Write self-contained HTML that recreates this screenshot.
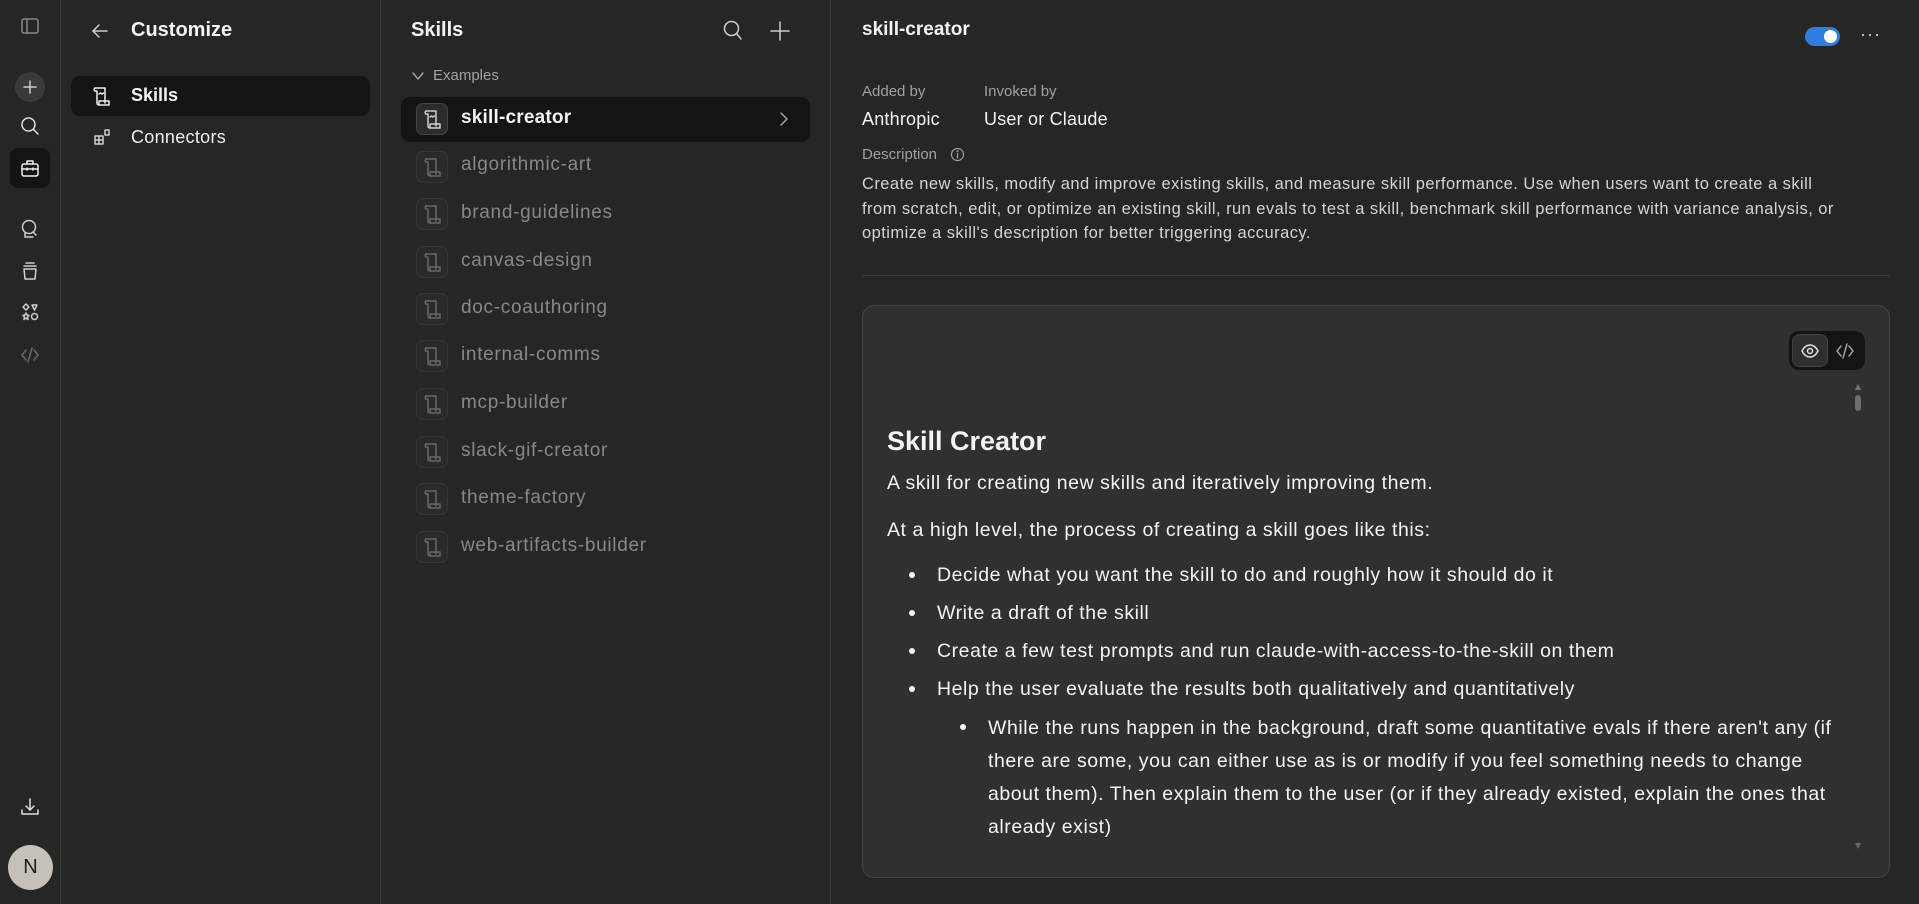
<!DOCTYPE html>
<html><head><meta charset="utf-8"><style>
*{box-sizing:border-box;margin:0;padding:0}
body{width:1919px;height:904px;background:#262624;font-family:"Liberation Sans",sans-serif;color:#f5f4ef;position:relative;overflow:hidden}
.abs{position:absolute}
.vl{position:absolute;top:0;width:1px;height:904px;background:#3a3a37}
svg{position:absolute;fill:none;stroke:currentColor;stroke-width:1.5;stroke-linecap:round;stroke-linejoin:round}
.ico{color:#c8c6bf}
.item{position:absolute;left:416px;font-size:19px;letter-spacing:0.7px;color:#8a8883;white-space:nowrap}
.ib{position:absolute;left:416px;width:32px;height:32px;border:1px solid #363633;border-radius:7px;background:#2a2a28}
.lbl{font-size:15px;color:#a3a19b}
.ct{font-size:19.5px;letter-spacing:0.55px;color:#f5f4ef;position:absolute;white-space:nowrap}
.dot{position:absolute;width:6px;height:6px;border-radius:50%;background:#f5f4ef}
</style></head><body>
<div class="vl" style="left:60px"></div>
<div class="vl" style="left:380px"></div>
<div class="vl" style="left:830px"></div>

<!-- left rail -->
<svg class="ico" style="left:20px;top:16px;color:#8a8883" width="20" height="20" viewBox="0 0 20 20"><rect x="2" y="3" width="16" height="14" rx="2"/><line x1="7" y1="3" x2="7" y2="17"/></svg>
<div class="abs" style="left:15px;top:72px;width:30px;height:30px;border-radius:50%;background:#3a3a37"></div>
<svg style="left:20px;top:77px;color:#d0cec7" width="20" height="20" viewBox="0 0 20 20"><line x1="10" y1="4" x2="10" y2="16"/><line x1="4" y1="10" x2="16" y2="10"/></svg>
<svg style="left:19px;top:115px;color:#e0ded7" width="22" height="22" viewBox="0 0 22 22"><circle cx="9.5" cy="9.5" r="6.5"/><line x1="14.5" y1="14.5" x2="19" y2="19"/></svg>
<div class="abs" style="left:10px;top:148px;width:40px;height:40px;border-radius:8px;background:#141413"></div>
<svg style="left:19px;top:157px;color:#f0eee8" width="22" height="22" viewBox="0 0 22 22"><rect x="3" y="7" width="16" height="12" rx="2"/><path d="M8 7V4h6v3"/><line x1="3" y1="12" x2="19" y2="12"/><line x1="8" y1="11" x2="8" y2="13"/><line x1="14" y1="11" x2="14" y2="13"/></svg>
<svg style="left:19px;top:218px;color:#d0cec7" width="22" height="22" viewBox="0 0 22 22"><circle cx="10" cy="9" r="6.5"/><path d="M6 15v4h8"/><path d="M14 14l3 3"/></svg>
<svg style="left:20px;top:260px;color:#d0cec7" width="20" height="22" viewBox="0 0 20 22"><line x1="6" y1="3" x2="14" y2="3"/><line x1="4" y1="6" x2="16" y2="6"/><path d="M4 9h12l-1 10H5z"/></svg>
<svg style="left:20px;top:302px;color:#d0cec7" width="20" height="20" viewBox="0 0 20 20"><path d="M6 2l3 3-3 3-3-3z"/><path d="M12 3h5l-2.5 5z"/><path d="M6 11l1 2 2 .5-1.5 1.5.5 2.5L6 16l-2 1.5.5-2.5L3 13.5 5 13z"/><circle cx="14.5" cy="14.5" r="3"/></svg>
<svg style="left:20px;top:345px;color:#6a6864" width="20" height="20" viewBox="0 0 20 20"><path d="M6 5l-4 5 4 5"/><path d="M14 5l4 5-4 5"/><line x1="12" y1="3" x2="8" y2="17"/></svg>
<svg style="left:20px;top:797px;color:#e0ded7" width="20" height="20" viewBox="0 0 20 20"><line x1="10" y1="2" x2="10" y2="13"/><path d="M6 9l4 4 4-4"/><path d="M2 13v4h16v-4"/></svg>
<div class="abs" style="left:8px;top:845px;width:45px;height:45px;border-radius:50%;background:#c4c1b9;color:#1e1e1d;font-size:20px;text-align:center;line-height:45px">N</div>

<!-- customize column -->
<svg style="left:90px;top:21px;color:#d0cec7" width="20" height="20" viewBox="0 0 20 20"><line x1="3" y1="10" x2="17" y2="10"/><path d="M9 4l-6 6 6 6"/></svg>
<div class="abs" style="left:131px;top:19px;font-size:20px;font-weight:bold">Customize</div>
<div class="abs" style="left:71px;top:76px;width:299px;height:40px;border-radius:9px;background:#141413"></div>
<svg style="left:92px;top:85px;color:#f0eee8" width="20" height="22" viewBox="0 0 20 22"><path d="M3 3h10v15"/><path d="M3 3c-1 0-1 3 0 3h2v12c0 2 2 2 2 2h10v-4H7v4"/><path d="M7 9l1.5-1 1.5 1 1.5-1"/></svg>
<div class="abs" style="left:131px;top:85px;font-size:18px;font-weight:bold">Skills</div>
<svg style="left:92px;top:127px;color:#d0cec7" width="20" height="20" viewBox="0 0 20 20"><rect x="3" y="9" width="8" height="8"/><line x1="7" y1="9" x2="7" y2="17"/><line x1="3" y1="13" x2="11" y2="13"/><rect x="13" y="3" width="4" height="5"/></svg>
<div class="abs" style="left:131px;top:127px;font-size:18px;color:#f0eee8;letter-spacing:0.3px">Connectors</div>

<!-- skills column -->
<div class="abs" style="left:411px;top:19px;font-size:20px;font-weight:bold">Skills</div>
<svg style="left:722px;top:19px;color:#d0cec7" width="22" height="22" viewBox="0 0 22 22"><circle cx="9.5" cy="9.5" r="7"/><line x1="14.5" y1="14.5" x2="19" y2="20"/></svg>
<svg style="left:769px;top:20px;color:#d0cec7" width="22" height="22" viewBox="0 0 22 22"><line x1="11" y1="2" x2="11" y2="20"/><line x1="2" y1="11" x2="20" y2="11"/></svg>
<svg style="left:411px;top:69px;color:#a3a19b" width="14" height="14" viewBox="0 0 14 14"><path d="M2 4l5 6 5-6"/></svg>
<div class="abs lbl" style="left:433px;top:67px">Examples</div>
<div class="abs" style="left:401px;top:97px;width:409px;height:45px;border-radius:9px;background:#141413"></div>
<svg style="left:778px;top:110px;color:#a3a19b" width="12" height="18" viewBox="0 0 12 18"><path d="M3 3l6 6-6 6"/></svg>

<div class="ib" style="top:103px;border-color:#444;background:#2c2c2a"></div>
<div class="item" style="left:461px;top:107px;color:#f5f4ef;font-weight:bold;letter-spacing:0.2px">skill-creator</div>
<div class="ib" style="top:151px"></div><div class="item" style="left:461px;top:154px">algorithmic-art</div>
<div class="ib" style="top:198px"></div><div class="item" style="left:461px;top:202px">brand-guidelines</div>
<div class="ib" style="top:246px"></div><div class="item" style="left:461px;top:250px">canvas-design</div>
<div class="ib" style="top:293px"></div><div class="item" style="left:461px;top:297px">doc-coauthoring</div>
<div class="ib" style="top:340px"></div><div class="item" style="left:461px;top:344px">internal-comms</div>
<div class="ib" style="top:388px"></div><div class="item" style="left:461px;top:392px">mcp-builder</div>
<div class="ib" style="top:436px"></div><div class="item" style="left:461px;top:440px">slack-gif-creator</div>
<div class="ib" style="top:483px"></div><div class="item" style="left:461px;top:487px">theme-factory</div>
<div class="ib" style="top:531px"></div><div class="item" style="left:461px;top:535px">web-artifacts-builder</div>
<svg style="left:423px;top:108px;color:#d0cec7" width="20" height="22" viewBox="0 0 20 22"><path d="M3 3h10v15"/><path d="M3 3c-1 0-1 3 0 3h2v12c0 2 2 2 2 2h10v-4H7v4"/><path d="M7 9l1.5-1 1.5 1 1.5-1"/></svg>
<svg style="left:423px;top:156px;color:#6a6864" width="20" height="22" viewBox="0 0 20 22"><path d="M3 3h10v15"/><path d="M3 3c-1 0-1 3 0 3h2v12c0 2 2 2 2 2h10v-4H7v4"/></svg>
<svg style="left:423px;top:203px;color:#6a6864" width="20" height="22" viewBox="0 0 20 22"><path d="M3 3h10v15"/><path d="M3 3c-1 0-1 3 0 3h2v12c0 2 2 2 2 2h10v-4H7v4"/></svg>
<svg style="left:423px;top:251px;color:#6a6864" width="20" height="22" viewBox="0 0 20 22"><path d="M3 3h10v15"/><path d="M3 3c-1 0-1 3 0 3h2v12c0 2 2 2 2 2h10v-4H7v4"/></svg>
<svg style="left:423px;top:298px;color:#6a6864" width="20" height="22" viewBox="0 0 20 22"><path d="M3 3h10v15"/><path d="M3 3c-1 0-1 3 0 3h2v12c0 2 2 2 2 2h10v-4H7v4"/></svg>
<svg style="left:423px;top:345px;color:#6a6864" width="20" height="22" viewBox="0 0 20 22"><path d="M3 3h10v15"/><path d="M3 3c-1 0-1 3 0 3h2v12c0 2 2 2 2 2h10v-4H7v4"/></svg>
<svg style="left:423px;top:393px;color:#6a6864" width="20" height="22" viewBox="0 0 20 22"><path d="M3 3h10v15"/><path d="M3 3c-1 0-1 3 0 3h2v12c0 2 2 2 2 2h10v-4H7v4"/></svg>
<svg style="left:423px;top:441px;color:#6a6864" width="20" height="22" viewBox="0 0 20 22"><path d="M3 3h10v15"/><path d="M3 3c-1 0-1 3 0 3h2v12c0 2 2 2 2 2h10v-4H7v4"/></svg>
<svg style="left:423px;top:488px;color:#6a6864" width="20" height="22" viewBox="0 0 20 22"><path d="M3 3h10v15"/><path d="M3 3c-1 0-1 3 0 3h2v12c0 2 2 2 2 2h10v-4H7v4"/></svg>
<svg style="left:423px;top:536px;color:#6a6864" width="20" height="22" viewBox="0 0 20 22"><path d="M3 3h10v15"/><path d="M3 3c-1 0-1 3 0 3h2v12c0 2 2 2 2 2h10v-4H7v4"/></svg>

<!-- right panel -->
<div class="abs" style="left:862px;top:19px;font-size:19px;font-weight:bold">skill-creator</div>
<div class="abs" style="left:1805px;top:27px;width:35px;height:19px;border-radius:10px;background:#2d7ee0"></div>
<div class="abs" style="left:1824px;top:30px;width:13px;height:13px;border-radius:50%;background:#fff"></div>
<div class="abs" style="left:1860px;top:24px;font-size:18px;color:#d0cec7;letter-spacing:1px">···</div>
<div class="abs lbl" style="left:862px;top:83px">Added by</div>
<div class="abs lbl" style="left:984px;top:83px">Invoked by</div>
<div class="abs" style="left:862px;top:109px;font-size:18px;letter-spacing:0.2px">Anthropic</div>
<div class="abs" style="left:984px;top:109px;font-size:18px;letter-spacing:0.2px">User or Claude</div>
<div class="abs lbl" style="left:862px;top:146px">Description</div>
<svg style="left:950px;top:147px;color:#a3a19b;stroke-width:1.2" width="15" height="15" viewBox="0 0 15 15"><circle cx="7.5" cy="7.5" r="6"/><line x1="7.5" y1="6.5" x2="7.5" y2="11"/><circle cx="7.5" cy="4.3" r=".4"/></svg>
<div class="abs" style="left:862px;top:172px;font-size:16.5px;letter-spacing:0.45px;line-height:24.5px;color:#d6d4cd;white-space:nowrap">Create new skills, modify and improve existing skills, and measure skill performance. Use when users want to create a skill<br>from scratch, edit, or optimize an existing skill, run evals to test a skill, benchmark skill performance with variance analysis, or<br>optimize a skill's description for better triggering accuracy.</div>
<div class="abs" style="left:862px;top:275px;width:1028px;height:1px;background:#3a3a37"></div>

<div class="abs" style="left:862px;top:305px;width:1028px;height:573px;border-radius:12px;background:#30302e;border:1px solid #42423f"></div>
<div class="abs" style="left:1789px;top:331px;width:76px;height:39px;border-radius:10px;background:#141413"></div>
<div class="abs" style="left:1792px;top:334px;width:36px;height:33px;border-radius:8px;background:#2f2f2d;border:1px solid #444"></div>
<svg style="left:1800px;top:341px;color:#e0ded7" width="20" height="20" viewBox="0 0 20 20"><path d="M2 10c2-4 5-6 8-6s6 2 8 6c-2 4-5 6-8 6s-6-2-8-6z"/><circle cx="10" cy="10" r="2.5"/></svg>
<svg style="left:1835px;top:341px;color:#a3a19b" width="20" height="20" viewBox="0 0 20 20"><path d="M6 5l-4 5 4 5"/><path d="M14 5l4 5-4 5"/><line x1="12" y1="3" x2="8" y2="17"/></svg>
<div class="abs" style="left:1855px;top:384px;width:0;height:0;border-left:3px solid transparent;border-right:3px solid transparent;border-bottom:6px solid #777"></div>
<div class="abs" style="left:1855px;top:395px;width:6px;height:16px;border-radius:3px;background:#6e6d69"></div>
<div class="abs" style="left:1855px;top:843px;width:0;height:0;border-left:3px solid transparent;border-right:3px solid transparent;border-top:6px solid #666"></div>

<div class="ct" style="left:887px;top:426px;font-size:27px;font-weight:bold;letter-spacing:0">Skill Creator</div>
<div class="ct" style="left:887px;top:472px">A skill for creating new skills and iteratively improving them.</div>
<div class="ct" style="left:887px;top:519px">At a high level, the process of creating a skill goes like this:</div>
<div class="dot" style="left:909px;top:572px"></div><div class="ct" style="left:937px;top:564px">Decide what you want the skill to do and roughly how it should do it</div>
<div class="dot" style="left:909px;top:610px"></div><div class="ct" style="left:937px;top:602px">Write a draft of the skill</div>
<div class="dot" style="left:909px;top:648px"></div><div class="ct" style="left:937px;top:640px">Create a few test prompts and run claude-with-access-to-the-skill on them</div>
<div class="dot" style="left:909px;top:686px"></div><div class="ct" style="left:937px;top:678px">Help the user evaluate the results both qualitatively and quantitatively</div>
<div class="dot" style="left:960px;top:724px"></div>
<div class="ct" style="left:988px;top:712px;line-height:33px">While the runs happen in the background, draft some quantitative evals if there aren't any (if<br>there are some, you can either use as is or modify if you feel something needs to change<br>about them). Then explain them to the user (or if they already existed, explain the ones that<br>already exist)</div>
</body></html>
